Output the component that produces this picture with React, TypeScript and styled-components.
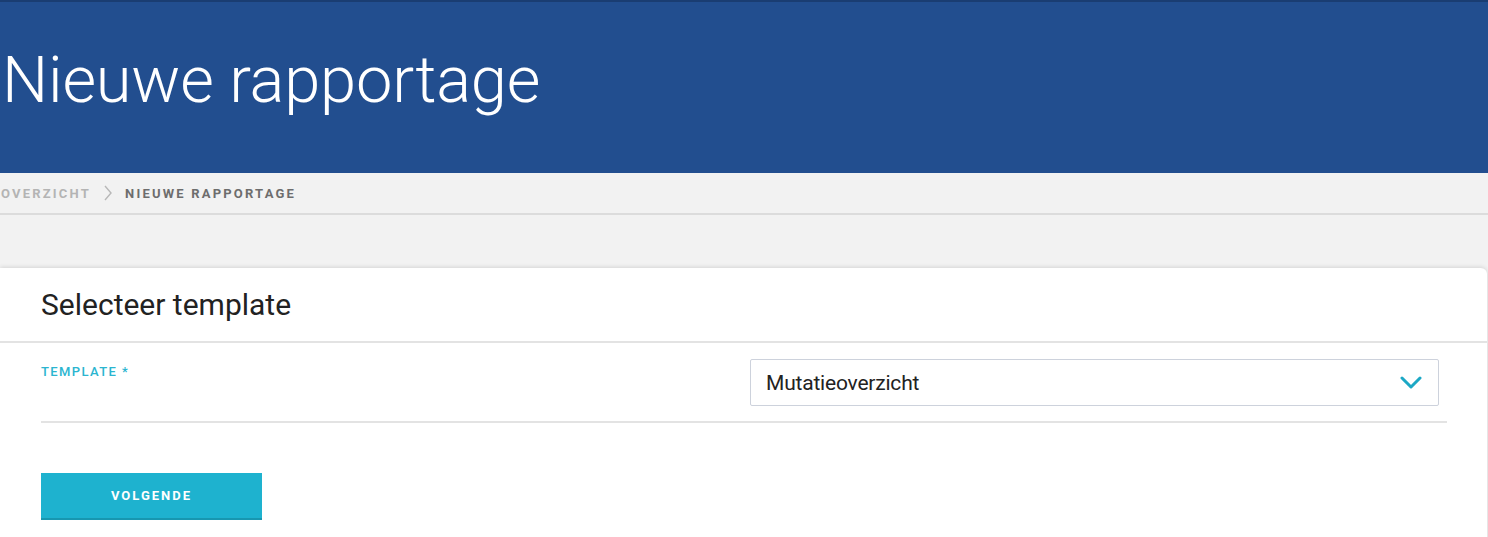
import React from 'react';
import styled, { createGlobalStyle } from 'styled-components';

const GlobalStyle = createGlobalStyle`
  html, body {
    margin: 0;
    padding: 0;
    background: #f2f2f2;
    font-family: Roboto, "Liberation Sans", sans-serif;
    overflow: hidden;
  }
`;

const Page = styled.div`
  width: 1488px;
  height: 537px;
  background: #f2f2f2;
  overflow: hidden;
`;

const Header = styled.header`
  height: 173px;
  background: #224e8f;
  border-top: 2px solid #1a3d72;
  box-sizing: border-box;
  display: flex;
  align-items: center;
  padding-left: 2px;
`;

const Title = styled.h1`
  margin: 0 0 16px;
  font-size: 65px;
  font-weight: 300;
  color: #ffffff;
  letter-spacing: -0.2px;
`;

const Breadcrumbs = styled.nav`
  height: 40px;
  display: flex;
  align-items: center;
  gap: 12px;
  padding-left: 1px;
  border-bottom: 2px solid #dcdcdc;
  font-size: 13px;
  font-weight: 700;
  letter-spacing: 2.2px;
  text-transform: uppercase;
`;

const Crumb = styled.span<{ $active?: boolean }>`
  color: ${({ $active }) => ($active ? '#6d6d6d' : '#b4b4b4')};
`;

const Card = styled.section`
  margin: 53px 1px 0 0;
  background: #ffffff;
  border-radius: 0 6px 0 0;
  box-shadow: 0 -1px 4px rgba(0, 0, 0, 0.12), -1px 0 0 #dcdcdc;
  height: 300px;
`;

const CardHeader = styled.div`
  height: 75px;
  display: flex;
  align-items: center;
  padding-left: 41px;
  border-bottom: 2px solid #e3e3e3;
  box-sizing: border-box;
`;

const CardTitle = styled.h2`
  margin: 0;
  font-size: 30px;
  font-weight: 400;
  color: #222;
`;

const CardBody = styled.div`
  padding: 0 40px 0 41px;
`;

const FieldRow = styled.div`
  display: flex;
  justify-content: space-between;
  padding: 16px 8px 15px 0;
  border-bottom: 2px solid #e3e3e3;
`;

const Label = styled.label`
  font-size: 13px;
  font-weight: 500;
  letter-spacing: 1.4px;
  color: #2bb5d0;
  margin-top: 5px;
`;

const Select = styled.div`
  width: 689px;
  height: 47px;
  box-sizing: border-box;
  border: 1px solid #cdd2dc;
  border-radius: 2px;
  display: flex;
  align-items: center;
  justify-content: space-between;
  padding: 0 16px 0 15px;
  font-size: 21px;
  color: #222;
  letter-spacing: -0.2px;
`;

const Actions = styled.div`
  padding-top: 50px;
`;

const Button = styled.button`
  width: 221px;
  height: 47px;
  border: none;
  border-bottom: 2px solid #1797b0;
  background: #1eb2cf;
  color: #ffffff;
  font-family: Roboto, "Liberation Sans", sans-serif;
  font-size: 13px;
  font-weight: 700;
  letter-spacing: 2px;
  cursor: pointer;
`;

const Chevron = () => (
  <svg width="22" height="14" viewBox="0 0 22 14" fill="none">
    <path d="M2 2 L11 11 L20 2" stroke="#1ca8c5" strokeWidth="3" strokeLinecap="round" strokeLinejoin="round" />
  </svg>
);

const Separator = () => (
  <svg width="10" height="16" viewBox="0 0 10 16" fill="none">
    <path d="M2 1 L8 8 L2 15" stroke="#b8b8b8" strokeWidth="1.4" />
  </svg>
);

export default function App() {
  return (
    <Page>
      <GlobalStyle />
      <Header>
        <Title>Nieuwe rapportage</Title>
      </Header>
      <Breadcrumbs>
        <Crumb>Overzicht</Crumb>
        <Separator />
        <Crumb $active>Nieuwe rapportage</Crumb>
      </Breadcrumbs>
      <Card>
        <CardHeader>
          <CardTitle>Selecteer template</CardTitle>
        </CardHeader>
        <CardBody>
          <FieldRow>
            <Label>TEMPLATE *</Label>
            <Select>
              <span>Mutatieoverzicht</span>
              <Chevron />
            </Select>
          </FieldRow>
          <Actions>
            <Button>VOLGENDE</Button>
          </Actions>
        </CardBody>
      </Card>
    </Page>
  );
}
